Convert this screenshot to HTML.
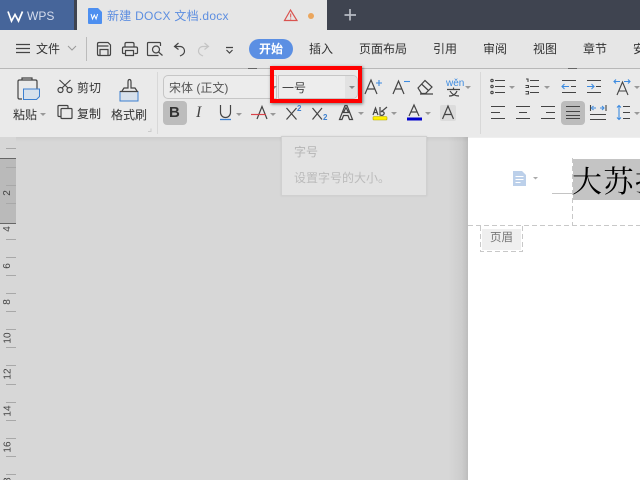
<!DOCTYPE html>
<html><head><meta charset="utf-8">
<style>
*{box-sizing:border-box}
html{margin:0;padding:0;width:640px;height:480px;overflow:hidden}
body{margin:0;padding:0;width:640px;height:480px;overflow:hidden;position:relative;background:#d7d7d7;font-family:"Liberation Sans","Noto Sans CJK SC",sans-serif;color:#333}
#w{position:absolute;left:0;top:0;width:640px;height:480px;overflow:hidden}
.a{position:absolute}
.t{position:absolute;font-size:12px;line-height:14px;white-space:nowrap;color:#333}
.r{position:absolute;font-size:10px;line-height:10px;white-space:nowrap;color:#444;transform:rotate(-90deg)}
svg{position:absolute;overflow:visible}
svg .k{fill:none;stroke:#444;stroke-width:1.2}
.dd{position:absolute;width:0;height:0;border-left:3px solid transparent;border-right:3px solid transparent;border-top:3px solid #999}
</style></head><body><div id="w">
<!-- title bar -->
<div class="a" style="left:0;top:0;width:640px;height:30px;background:#3f4450"></div>
<div class="a" style="left:0;top:0;width:74px;height:30px;background:#46659a"></div>
<div class="a" style="left:77px;top:0;width:250px;height:30px;background:#e6e6e6"></div>
<svg style="left:0;top:0" width="640" height="30">
<path d="M8 11.500 L11.500 21 L15 14.500 L18.500 21 L22.500 11.500" fill="none" stroke="#fff" stroke-width="1.700"/>
<path d="M88 9 q0-1 1-1 h9 l4 4 v11 q0 1-1 1 h-12 q-1 0-1-1z" fill="#4d8ff0"/>
<path d="M91 14 l1.500 5 1.800-4 1.800 4 1.500-5" fill="none" stroke="#fff" stroke-width="1"/>
<path d="M290.500 10 L284.500 20.500 H297 Z" fill="none" stroke="#d9534f" stroke-width="1.200"/>
<path d="M290.700 13.500 v4 M290.700 18.500 v1" stroke="#d9534f" stroke-width="1"/>
<circle cx="311" cy="16" r="3" fill="#eba65d"/>
<path d="M344.500 15 H356 M350 9 V20.500" stroke="#b8bcc4" stroke-width="1.700"/>
</svg>
<div class="t" style="left:27px;top:9px;color:#d5dced;font-size:12px">WPS</div>
<div class="t" style="left:107px;top:9px;color:#5d8ee0;font-size:12px;letter-spacing:.25px">新建 DOCX 文档.docx</div>
<!-- menu row -->
<div class="a" style="left:0;top:30px;width:640px;height:38px;background:#e6e6e6"></div>
<div class="a" style="left:0;top:68px;width:640px;height:1px;background:#b8b8b8"></div>
<div class="a" style="left:248px;top:68px;width:9px;height:1px;background:#666"></div>
<div class="a" style="left:568px;top:68px;width:9px;height:1px;background:#666"></div>
<svg style="left:0;top:30px" width="260" height="38">
<path class="k" d="M16 14.500 H30 M16 18.500 H30 M16 22.500 H30"/>
<path d="M68 16 l4 4 4-4" fill="none" stroke="#999" stroke-width="1"/>
<path d="M86.500 7 V31" stroke="#bbb"/>
<path class="k" d="M97.500 14 q0-1.500 1.500-1.500 h9 l2.500 2.500 v9 q0 1.500-1.500 1.500 h-10 q-1.500 0-1.500-1.500z M100 25.500 v-6 h8 v6 M97.500 16 h11"/>
<path class="k" d="M125 17 v-3 q0-1.500 1.500-1.500 h6 q1.500 0 1.500 1.500 v3 M125.500 23.500 h-2 q-1 0-1-1 v-4 q0-1.500 1.500-1.500 h12 q1.500 0 1.500 1.500 v4 q0 1-1 1 h-2 M125.500 20.500 h8 v5 h-8z"/>
<path class="k" d="M158.500 25.500 h-10 q-1 0-1-1 v-11 q0-1 1-1 h11 q1 0 1 1 v2.500"/>
<circle class="k" cx="156" cy="19.500" r="3.500"/>
<path class="k" d="M158.500 22 l4 3.500"/>
<path class="k" d="M178.500 13 l-4 3.500 4 3 M174.500 16.500 h6 a4.500 4.500 0 0 1 1.500 8.500 l-2 1"/>
<path d="M204.500 13 l4 3.500-4 3 M208.500 16.500 h-6 a4.500 4.500 0 0 0 -1.500 8.500 l2 1" fill="none" stroke="#c4c4c4" stroke-width="1.200"/>
<path class="k" d="M226 17.500 h7 M226.500 20 l3 3 3-3"/>
</svg>
<div class="t" style="left:36px;top:42px">文件</div>
<div class="a" style="left:249px;top:39px;width:44px;height:20px;border-radius:10px;background:#5b8fe3"></div>
<div class="t" style="left:259px;top:42px;color:#fff;font-weight:bold">开始</div>
<div class="t" style="left:309px;top:42px">插入</div>
<div class="t" style="left:359px;top:42px">页面布局</div>
<div class="t" style="left:433px;top:42px">引用</div>
<div class="t" style="left:483px;top:42px">审阅</div>
<div class="t" style="left:533px;top:42px">视图</div>
<div class="t" style="left:583px;top:42px">章节</div>
<div class="t" style="left:633px;top:42px">安</div>
<!-- toolbar -->
<div class="a" style="left:0;top:69px;width:640px;height:68px;background:#eaeaea"></div>
<div class="a" style="left:157px;top:72px;width:1px;height:62px;background:#d8d8d8"></div>
<div class="a" style="left:480px;top:72px;width:1px;height:62px;background:#d8d8d8"></div>
<svg style="left:0;top:69px" width="160" height="68">
<path class="k" d="M22 30 h-2.500 q-1.500 0-1.500-1.500 v-16 q0-1.500 1.500-1.500 h16 q1.500 0 1.500 1.500 v7 M22 11 v-2 h10 v2"/>
<path d="M23.500 20 h16 v7.500 l-3 3 h-13z" fill="#d7e1ec" stroke="#3d80d0" stroke-width="1"/>
<circle cx="60.500" cy="21" r="2.500" class="k"/><circle cx="69.500" cy="21" r="2.500" class="k"/>
<path class="k" d="M62 19 L70.500 11 M68 19 L59.500 11"/>
<path class="k" d="M61 47.500 h-2 q-1 0-1-1 v-9 q0-1 1-1 h8 q1 0 1 1 v2"/>
<path class="k" d="M62 39.500 h9 q1 0 1 1 v8 q0 1-1 1 h-9 q-1 0-1-1 v-8 q0-1 1-1z"/>
<path class="k" d="M122 22 l2-3 h4 v-6 q0-2.500 1.500-2.500 t1.500 2.500 v6 h4 l2 3"/>
<path d="M120 22.500 h18 v9.500 h-18z" fill="#d7e1ec" stroke="#3d80d0" stroke-width="1"/>
<path class="k" d="M120 22.500 h18"/>
<path d="M148 62.500 h3 v-3" fill="none" stroke="#ccc"/>
</svg>
<div class="t" style="left:13px;top:108px">粘贴</div><div class="dd" style="left:40px;top:113px"></div>
<div class="t" style="left:77px;top:81px">剪切</div>
<div class="t" style="left:77px;top:107px">复制</div>
<div class="t" style="left:111px;top:108px">格式刷</div>
<!-- font box -->
<div class="a" style="left:163px;top:75px;width:114px;height:24px;border:1px solid #c6c6c6;border-radius:5px 0 0 5px;background:#ececec"></div>
<div class="t" style="left:169px;top:81px;color:#555">宋体 (正文)</div>
<div class="dd" style="left:271px;top:86px;border-top-color:#888"></div>
<!-- size box -->
<div class="a" style="left:278px;top:75px;width:80px;height:24px;border:1px solid #c6c6c6;border-radius:0 5px 5px 0;background:#ededed"></div>
<div class="a" style="left:345px;top:76px;width:12px;height:22px;background:#e2e2e2;border-radius:0 4px 4px 0"></div>
<div class="t" style="left:282px;top:81px;color:#444">一号</div>
<div class="dd" style="left:349px;top:86px;border-top-color:#888"></div>
<!-- red rect -->
<div class="a" style="left:270px;top:66px;width:92px;height:37px;border:4px solid #f00;box-shadow:1px 1px 3px rgba(0,0,0,.5)"></div>
<!-- font row icons -->
<div class="a" style="left:163px;top:101px;width:24px;height:24px;border-radius:4px;background:#bcbcbc"></div>
<div class="t" style="left:169px;top:105px;font-size:15px;line-height:16px;font-weight:bold;color:#333">B</div>
<div class="t" style="left:196px;top:104px;font-size:16px;line-height:18px;font-family:'Liberation Serif',serif;font-style:italic;color:#444">I</div>
<svg style="left:155px;top:62px" width="330" height="74">
<path class="k" d="M65.500 43 v7.500 a5 5 0 0 0 10 0 v-7.500"/><path d="M65 57.500 h11" stroke="#3d80d0" stroke-width="1.300"/>
<path class="k" d="M102 57 l5-12.500 5 12.500"/><path d="M96 52.500 h15" stroke="#d9434a" stroke-width="1.200"/>
<path class="k" d="M131.500 46 l10 11.500 M141.500 46 l-10 11.500"/>
<path class="k" d="M157.500 46 l9.500 11.500 M167 46 l-9.500 11.500"/>
<path class="k" d="M184.500 57.500 l5.500-14 h2 l5.500 14 h-3 l-1.500-4 h-4.500 l-1.500 4z M188.500 50.500 h5 l-2.500-5z" stroke-width="1"/>
<path class="k" d="M218 53 l2.500-7 2.500 7 M219 50.500 h3 M225 45 v8 q3 1 4-1 t-3-3"/>
<path class="k" d="M226 50 l6-5"/>
<rect x="218" y="54.500" width="14" height="3.500" rx="1" fill="#fff000" stroke="#b3a800" stroke-width=".6"/>
<path class="k" d="M254 54 l5-11 5 11 M256 50 h6"/>
<rect x="252" y="55.500" width="15" height="3" fill="#00c"/>
<rect x="285" y="43" width="16" height="16" rx="2" fill="#dcdcdc"/>
<path class="k" d="M287.500 57 l5.500-13 5.500 13 M289.500 52.500 h7"/>
<path class="k" d="M210 32 l6-14 6 14 M212.500 27 h7"/>
<path d="M221 21 h6 M224 18 v6" stroke="#3d8be0" stroke-width="1.100"/>
<path class="k" d="M238 32 l5.500-13 5.500 13 M240.500 27 h6"/>
<path d="M249 19.500 h6" stroke="#3d8be0" stroke-width="1.100"/>
<path class="k" d="M263 26 l7-7.500 7 6.500 -6.500 6.500 h-4z M266.500 22 l7 6.500 M265 32 h13"/>
<path class="k" d="M292 27.500 h13 M298.500 25.500 v2 M295 29 q3 5 9 5 M302 29 q-2 5 -8 5"/>
</svg>
<div class="t" style="left:446px;top:79px;font-size:10px;line-height:10px;color:#3d8be0">wěn</div>
<div class="dd" style="left:236px;top:113px"></div>
<div class="dd" style="left:270px;top:113px"></div>
<div class="t" style="left:297px;top:104px;font-size:8px;line-height:9px;color:#3d80d0;font-weight:bold">2</div>
<div class="t" style="left:323px;top:113px;font-size:8px;line-height:9px;color:#3d80d0;font-weight:bold">2</div>
<div class="dd" style="left:358px;top:112px"></div>
<div class="dd" style="left:391px;top:112px"></div>
<div class="dd" style="left:425px;top:112px"></div>
<div class="dd" style="left:465px;top:86px"></div>
<!-- paragraph -->
<div class="a" style="left:561px;top:101px;width:24px;height:24px;border-radius:4px;background:#bcbcbc"></div>
<svg style="left:480px;top:62px" width="160" height="74">
<g fill="none" stroke="#444" stroke-width="1.100">
<path d="M15 18.500 h10 M15 24.500 h10 M15 30.500 h10"/>
<circle cx="12" cy="18.500" r="1.200"/><circle cx="12" cy="24.500" r="1.200"/><circle cx="12" cy="30.500" r="1.200"/>
<path d="M50 18.500 h9 M50 24.500 h9 M50 30.500 h9 M46 17 h2 v3 M45.500 23.500 h3 v2 h-3 M45.500 29.500 h3 v2.500 h-3"/>
<path d="M82 18.500 h14 M91 24.500 h5 M82 30.500 h14"/>
<path d="M107 18.500 h14 M116 24.500 h5 M107 30.500 h14"/>
<path d="M137 33 l5.500-13 5.500 13 M139 29 h7"/>
<path d="M11 44.500 h14 M11 50.500 h9 M11 56.500 h14"/>
<path d="M36 44.500 h14 M39 50.500 h8 M36 56.500 h14"/>
<path d="M61 44.500 h14 M66 50.500 h9 M61 56.500 h14"/>
<path d="M86 44.500 h14 M86 49.500 h14 M86 53.500 h14 M86 56.500 h14"/>
<path d="M110.500 43 v6 M126 43 v6 M110 52.500 h16 M110 57.500 h16"/>
<path d="M143 44.500 h7 M143 50.500 h7 M143 56.500 h7"/>
</g>
<g fill="none" stroke="#3d8be0" stroke-width="1.100">
<path d="M82 24.500 h7 M84.500 22 l-2.500 2.500 2.500 2.500"/>
<path d="M107 24.500 h7 M111.500 22 l2.500 2.500-2.500 2.500"/>
<path d="M134 19.500 h6 M136 17.500 l-2 2 2 2 M144 19.500 h6 M148 17.500 l2 2-2 2"/>
<path d="M113 46 h3 M113.500 44 l-2 2 2 2 M120 46 h3 M122 44 l2 2-2 2"/>
<path d="M139 43.500 v14 M137 45.500 l2-2 2 2 M137 55.500 l2 2 2-2"/>
</g>
</svg>
<div class="dd" style="left:509px;top:86px"></div>
<div class="dd" style="left:544px;top:86px"></div>
<div class="dd" style="left:634px;top:86px"></div>
<div class="dd" style="left:634px;top:112px"></div>
<!-- ruler -->
<div class="a" style="left:0;top:137px;width:16px;height:343px;background:#d7d7d7"></div>
<div class="a" style="left:0;top:158px;width:16px;height:66px;background:#bababa;border-top:1px solid #666;border-bottom:1px solid #666"></div>
<svg style="left:0;top:130px" width="16" height="350">
<path d="M6 18.500 h10 M6 37.500 h10 M6 55.500 h10 M6 73.500 h10 M6 109.500 h10 M6 127.500 h10 M6 145.500 h10 M6 163.500 h10 M6 181.500 h10 M6 199.500 h10 M6 217.500 h10 M6 235.500 h10 M6 254.500 h10 M6 272.500 h10 M6 290.500 h10 M6 308.500 h10 M6 326.500 h10 M6 344.500 h10" stroke="#a8a8a8"/>
</svg>
<div class="r" style="left:5px;top:188px">2</div>
<div class="r" style="left:5px;top:224px">4</div>
<div class="r" style="left:5px;top:261px">6</div>
<div class="r" style="left:5px;top:297px">8</div>
<div class="r" style="left:2.500px;top:333px">10</div>
<div class="r" style="left:2.500px;top:369px">12</div>
<div class="r" style="left:2.500px;top:406px">14</div>
<div class="r" style="left:2.500px;top:442px">16</div>
<div class="a" style="left:0;top:470px;width:16px;height:10px;overflow:hidden"><div class="r" style="left:2.500px;top:8px">18</div></div>
<!-- top shadow & page shadow -->
<div class="a" style="left:16px;top:137px;width:452px;height:5px;background:linear-gradient(to bottom,rgba(0,0,0,.05),rgba(0,0,0,0))"></div>
<div class="a" style="left:448px;top:137px;width:20px;height:343px;background:linear-gradient(to right,rgba(0,0,0,0),rgba(0,0,0,.05) 70%,rgba(0,0,0,.12))"></div>
<!-- tooltip -->
<div class="a" style="left:281px;top:136px;width:146px;height:60px;background:#e3e3e3;border:1px solid #d0d0d0;box-shadow:0 0 2px rgba(0,0,0,.08)"></div>
<div class="t" style="left:294px;top:145px;color:#b5b5b5">字号</div>
<div class="t" style="left:294px;top:171px;color:#bbb">设置字号的大小。</div>
<!-- page -->
<div class="a" style="left:468px;top:138px;width:172px;height:342px;background:#fff"></div>
<div class="a" style="left:468px;top:137px;width:172px;height:1px;background:#efefef"></div>
<svg style="left:468px;top:138px" width="172" height="342">
<path d="M45 33 h9 l4 4 v11 h-13z" fill="#bcd0ea"/>
<path d="M47.500 38.500 h8 M47.500 41.500 h8 M47.500 44.500 h5" stroke="#fff" stroke-width="1"/>
<path d="M65 39 h5 l-2.500 2.500z" fill="#aaa"/>
<path d="M84 55.500 h21" stroke="#c4c4c4"/>
<path d="M104.500 20 V88" stroke="#c8c8c8" stroke-dasharray="5 3"/>
<path d="M0 87.500 H172" stroke="#c8c8c8" stroke-dasharray="5 3"/>
<path d="M12.500 88 V113.500 H54.500 V88" fill="none" stroke="#c8c8c8" stroke-dasharray="5 3"/>
</svg>
<div class="a" style="left:573px;top:159px;width:67px;height:41px;background:#c4c4c4"></div>
<div class="a" style="left:572px;top:161px;font-family:'Noto Serif CJK SC','Liberation Serif',serif;font-size:30px;line-height:36px;letter-spacing:1.500px;color:#000;white-space:nowrap">大苏打</div>
<div class="a" style="left:482px;top:229px;width:39px;height:21px;background:#efefef"></div>
<div class="t" style="left:490px;top:231px;color:#777;font-size:11.500px">页眉</div>
</div></body></html>
